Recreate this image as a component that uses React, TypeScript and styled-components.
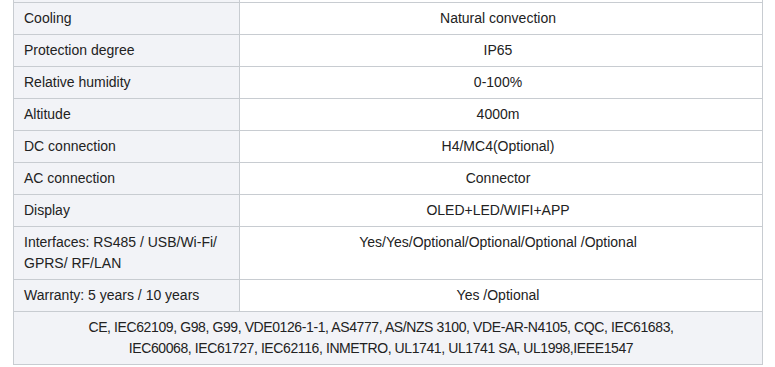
import styled, { createGlobalStyle } from "styled-components";

const GlobalStyle = createGlobalStyle`
    html, body {
        margin: 0;
        padding: 0;
        background: #ffffff;
    }
    body {
        font-family: "Liberation Sans", Arial, sans-serif;
        color: #222222;
        overflow: hidden;
    }
`;

const Page = styled.div`
    width: 775px;
    height: 367px;
    overflow: hidden;
    padding-left: 13px;
    box-sizing: border-box;
`;

const SpecTable = styled.table`
    width: 750px;
    border-collapse: collapse;
    font-size: 14px;
    line-height: 21px;
`;

// the bottom two pixels of the row scrolled out of view above
const EdgeCell = styled.td<{ $label?: boolean }>`
    height: 2px;
    padding: 0;
    line-height: 2px;
    font-size: 0;
    border-left: 1px solid #c8ccd1;
    border-right: 1px solid #c8ccd1;
    border-bottom: 1px solid #c8ccd1;
    background: ${(p) => (p.$label ? "#f2f3f7" : "#ffffff")};
`;

const LabelCell = styled.td`
    width: 205px;
    padding: 5px 10px;
    background: #f2f3f7;
    border: 1px solid #c8ccd1;
    text-align: left;
    vertical-align: top;
`;

const ValueCell = styled.td`
    padding: 5px 16px 5px 10px;
    border: 1px solid #c8ccd1;
    text-align: center;
    vertical-align: top;
    background: #ffffff;
`;

const CertCell = styled.td`
    padding: 5px 24px 5px 10px;
    border: 1px solid #c8ccd1;
    background: #f2f3f7;
    text-align: center;
    letter-spacing: -0.4px;
`;

const specs: [string, string][] = [
    ["Cooling", "Natural convection"],
    ["Protection degree", "IP65"],
    ["Relative humidity", "0-100%"],
    ["Altitude", "4000m"],
    ["DC connection", "H4/MC4(Optional)"],
    ["AC connection", "Connector"],
    ["Display", "OLED+LED/WIFI+APP"],
    ["Interfaces: RS485 / USB/Wi-Fi/ GPRS/ RF/LAN", "Yes/Yes/Optional/Optional/Optional /Optional"],
    ["Warranty: 5 years / 10 years", "Yes /Optional"],
];

const App = () => {
    return (
        <Page>
            <GlobalStyle />
            <SpecTable>
                <tbody>
                    <tr>
                        <EdgeCell $label />
                        <EdgeCell />
                    </tr>
                    {specs.map(([label, value]) => (
                        <tr key={label}>
                            <LabelCell>{label}</LabelCell>
                            <ValueCell>{value}</ValueCell>
                        </tr>
                    ))}
                    <tr>
                        <CertCell colSpan={2}>
                            CE, IEC62109, G98, G99, VDE0126-1-1, AS4777, AS/NZS 3100, VDE-AR-N4105, CQC, IEC61683,
                            <br />
                            IEC60068, IEC61727, IEC62116, INMETRO, UL1741, UL1741 SA, UL1998,IEEE1547
                        </CertCell>
                    </tr>
                </tbody>
            </SpecTable>
        </Page>
    );
};

export default App;
